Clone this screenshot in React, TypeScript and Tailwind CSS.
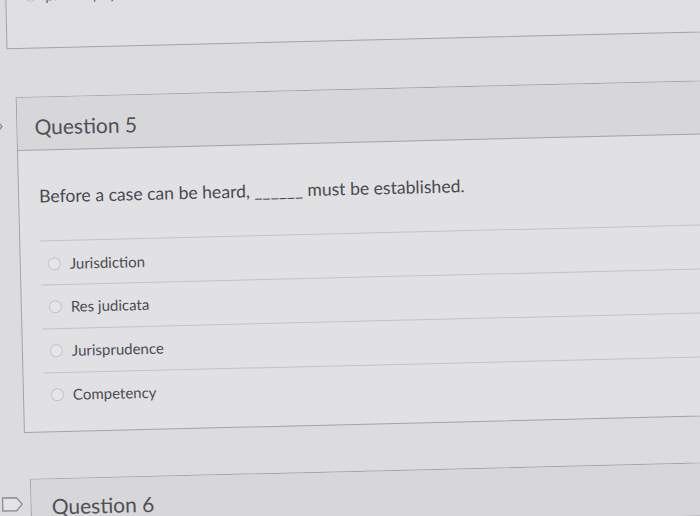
import React from "react";

const Radio = () => (
  <span className="inline-block h-[13px] w-[13px] shrink-0 rounded-full border border-[#c4c4c8] bg-[#e6e6e9]" />
);

const Flag = () => (
  <svg width="22" height="16" viewBox="0 0 22 16" className="shrink-0">
    <path d="M1 1.5 H15 L20.5 8 L15 14.5 H1 Z" fill="#e4e4e7" stroke="#8e8e94" strokeWidth="1.4" strokeLinejoin="round" />
  </svg>
);

const options = ["Jurisdiction", "Res judicata", "Jurisprudence", "Competency"];

export default function App() {
  return (
    <div
      className="relative h-[516px] w-[700px] overflow-hidden bg-[#dcdcdf] text-[#4c4c52]"
      style={{ fontFamily: "Lato, 'Open Sans', sans-serif" }}
    >
      <div className="h-[516px] w-[700px] rotate-[-1.4deg]">
        {/* previous question card (cut off) */}
        <div className="ml-[11px] mt-[-30px] h-[71px] w-[780px] border border-[#a2a2a7] bg-[#e0e0e3]">
          <div className="flex h-[32px] items-center gap-[8px] pl-[18px] text-[15px] text-[#6a6a70]">
            <Radio />
            <span>philosophy</span>
          </div>
        </div>

        {/* Question 5 */}
        <div className="relative ml-[19px] mt-[48px] w-[780px] border border-[#a2a2a7] bg-[#e1e1e4]">
          <div className="absolute left-[-36px] top-[20px]">
            <Flag />
          </div>
          <div className="flex h-[53px] items-center border-b border-[#a4a4a9] bg-[#d7d7da] pl-[17px] pt-[6px] text-[21px] text-[#505056]">
            Question 5
          </div>
          <div className="pb-[15px] pl-[20px]">
            <div className="pt-[34px] text-[17.6px] leading-[24px] text-[#4a4a50]">
              Before a case can be heard, ______ must be established.
            </div>
            <div className="mt-[32px]">
              {options.map((o, i) => (
                <div
                  key={o}
                  className={
                    i === 0
                      ? "flex h-[44px] items-center gap-[9px] border-t border-[#c2c2c6] pl-[7px] pt-[1px] text-[15px] text-[#4c4c52]"
                      : "flex h-[44px] items-center gap-[9px] border-t border-[#c2c2c6] pl-[7px] text-[15px] text-[#4c4c52]"
                  }
                >
                  <Radio />
                  <span>{o}</span>
                </div>
              ))}
            </div>
          </div>
        </div>

        {/* Question 6 */}
        <div className="relative ml-[24px] mt-[46px] w-[780px] border border-[#a2a2a7] bg-[#e1e1e4]">
          <div className="absolute left-[-30px] top-[16px]">
            <Flag />
          </div>
          <div className="flex h-[53px] items-center border-b border-[#a4a4a9] bg-[#d7d7da] pl-[20px] pt-[2px] text-[21px] text-[#505056]">
            Question 6
          </div>
        </div>
      </div>
    </div>
  );
}
